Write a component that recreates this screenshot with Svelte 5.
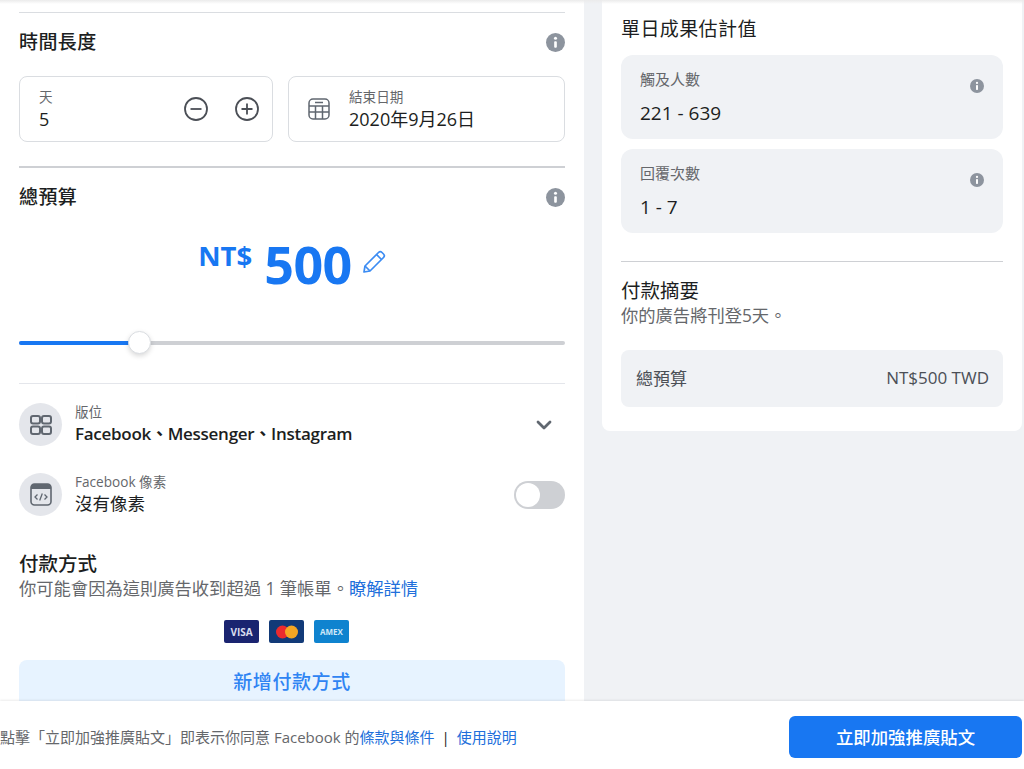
<script>
  const reach = [
    { label: '觸及人數', value: '221 - 639' },
    { label: '回覆次數', value: '1 - 7' }
  ];
</script>

{#snippet info(size)}
  <svg class="info" width={size} height={size} viewBox="0 0 20 20">
    <circle cx="10" cy="10" r="10" fill="#8d949e" />
    <circle cx="10" cy="5.6" r="1.6" fill="#fff" />
    <rect x="8.6" y="8.6" width="2.8" height="7" rx="1" fill="#fff" />
  </svg>
{/snippet}

<div class="page">
  <div class="top-shadow"></div>
  <main>
    <section class="left">
      <hr class="first" />
      <div class="head">
        <h2>時間長度</h2>
        {@render info(19)}
      </div>
      <div class="fields">
        <div class="field days">
          <div class="field-text">
            <span class="small">天</span>
            <span class="val">5</span>
          </div>
          <svg width="26" height="26" viewBox="0 0 26 26" fill="none" stroke="#4b4f56" stroke-width="1.8">
            <circle cx="13" cy="13" r="11" />
            <path d="M7.5 13h11" />
          </svg>
          <svg width="26" height="26" viewBox="0 0 26 26" fill="none" stroke="#4b4f56" stroke-width="1.8">
            <circle cx="13" cy="13" r="11" />
            <path d="M7.5 13h11M13 7.5v11" />
          </svg>
        </div>
        <div class="field date">
          <svg width="22" height="22" viewBox="0 0 22 22" fill="none" stroke="#606770" stroke-width="1.5">
            <rect x="1" y="1" width="20" height="20" rx="4" />
            <path d="M1 8h20M1 14h20M7.5 8v13M14.5 8v13M7 4.5h8" />
          </svg>
          <div class="field-text">
            <span class="small">結束日期</span>
            <span class="val">2020年9月26日</span>
          </div>
        </div>
      </div>

      <hr class="second" />
      <div class="head budget-head">
        <h2>總預算</h2>
        {@render info(19)}
      </div>
      <div class="amount">
        <span class="currency">NT$</span>
        <span class="sum">500</span>
        <svg class="pencil" width="26" height="26" viewBox="0 0 26 26" fill="none" stroke="#3c8cf3" stroke-width="1.7" stroke-linejoin="round">
          <path d="M3 23l1-6L17.5 3.5a2.5 2.5 0 0 1 3.5 0l1.5 1.5a2.5 2.5 0 0 1 0 3.5L9 22z" />
          <path d="M15.5 5.5l5 5M4 17l5 5" />
        </svg>
      </div>
      <div class="slider">
        <div class="fill"></div>
        <div class="thumb"></div>
      </div>

      <hr class="third" />
      <div class="row placement">
        <div class="round">
          <svg width="24" height="20" viewBox="0 0 24 20" fill="none" stroke="#606770" stroke-width="2">
            <rect x="2" y="1" width="9" height="7.5" rx="2" />
            <rect x="13" y="1" width="9" height="7.5" rx="2" />
            <rect x="2" y="11.5" width="9" height="7.5" rx="2" />
            <rect x="13" y="11.5" width="9" height="7.5" rx="2" />
          </svg>
        </div>
        <div class="row-text">
          <span class="small">版位</span>
          <strong>Facebook、Messenger、Instagram</strong>
        </div>
        <svg class="chev" width="16" height="10" viewBox="0 0 16 10" fill="none" stroke="#606770" stroke-width="2.8" stroke-linecap="round" stroke-linejoin="round">
          <path d="M2 2l6 6 6-6" />
        </svg>
      </div>
      <div class="row pixel">
        <div class="round">
          <svg width="22" height="23" viewBox="0 0 22 23" fill="none">
            <rect x="1" y="1" width="20" height="21" rx="3.5" stroke="#606770" stroke-width="1.6" />
            <path d="M1 4.5a3.5 3.5 0 0 1 3.5-3.5h13A3.5 3.5 0 0 1 21 4.5V6H1z" fill="#606770" />
            <path d="M7.5 11.5L5 14l2.500 2.500M14.500 11.500L17 14l-2.500 2.500M12.300 10.500l-2.600 7" stroke="#606770" stroke-width="1.300" />
          </svg>
        </div>
        <div class="row-text">
          <span class="small">Facebook 像素</span>
          <span class="plain">沒有像素</span>
        </div>
        <div class="toggle"><div class="knob"></div></div>
      </div>

      <h3 class="pay-title">付款方式</h3>
      <p class="sub">你可能會因為這則廣告收到超過 1 筆帳單。<span class="link">瞭解詳情</span></p>
      <div class="cards">
        <div class="card visa">VISA</div>
        <div class="card mc">
          <svg width="24" height="14" viewBox="0 0 24 14">
            <circle cx="7.500" cy="7" r="6.500" fill="#eb2a2e" />
            <circle cx="16.500" cy="7" r="6.500" fill="#f6a623" />
          </svg>
        </div>
        <div class="card amex">AMEX</div>
      </div>
      <div class="add-btn">新增付款方式</div>
    </section>

    <aside class="right">
      <h2 class="est">單日成果估計值</h2>
      {#each reach as item}
        <div class="stat">
          <div class="stat-text">
            <span class="stat-label">{item.label}</span>
            <span class="stat-value">{item.value}</span>
          </div>
          {@render info(14)}
        </div>
      {/each}
      <hr class="right-line" />
      <h3 class="summary">付款摘要</h3>
      <p class="sub run">你的廣告將刊登5天。</p>
      <div class="total">
        <span>總預算</span>
        <span>NT$500 TWD</span>
      </div>
    </aside>
  </main>

  <footer>
    <p>點擊「立即加強推廣貼文」即表示你同意 Facebook 的<span class="link">條款與條件</span><span class="sep">|</span><span class="link">使用說明</span></p>
    <div class="go">立即加強推廣貼文</div>
  </footer>
</div>

<style>
  :global(body) {
    background: #f0f2f5;
    font-family: "Open Sans", "Noto Sans CJK TC", sans-serif;
    color: #1c1e21;
  }

  .page {
    position: relative;
    width: 1024px;
    height: 769px;
    display: flex;
    flex-direction: column;
    overflow: hidden;
  }

  .top-shadow {
    position: absolute;
    left: 0;
    right: 0;
    top: 0;
    height: 4px;
    background: linear-gradient(#ebebeb, rgba(235, 235, 235, 0));
    z-index: 2;
  }

  main {
    flex: 1;
    min-height: 0;
    display: flex;
    align-items: flex-start;
    overflow: hidden;
  }

  hr {
    border: 0;
    margin: 0;
    background: #dadde1;
    height: 1px;
  }

  h2, h3, p {
    margin: 0;
    font-weight: 500;
  }

  .left {
    width: 584px;
    box-sizing: border-box;
    height: 760px;
    flex-shrink: 0;
    padding: 12px 19px 0;
    background: #fff;
  }

  .head {
    display: flex;
    justify-content: space-between;
    align-items: center;
    margin-top: 15px;
    height: 28px;
  }

  h2 {
    font-size: 19px;
    line-height: 28px;
    letter-spacing: 0.4px;
  }

  .fields {
    display: flex;
    gap: 15px;
    margin-top: 20px;
  }

  .field {
    box-sizing: border-box;
    height: 66px;
    border: 1px solid #dadde1;
    border-radius: 8px;
    display: flex;
    align-items: center;
  }

  .field-text {
    display: flex;
    flex-direction: column;
    padding-top: 2px;
  }

  .days {
    width: 254px;
    padding: 0 12px 0 19px;
    gap: 25px;
  }

  .days .field-text {
    flex: 1;
  }

  .date {
    flex: 1;
    padding: 0 19px;
    gap: 19px;
  }

  .small {
    font-size: 13.6px;
    line-height: 18px;
    color: #65676b;
  }

  .val {
    font-size: 18px;
    line-height: 27px;
  }

  .second {
    margin-top: 24px;
    height: 2px;
    background: #ced0d4;
  }

  .budget-head {
    margin-top: 15px;
  }

  .amount {
    display: flex;
    justify-content: center;
    margin-top: 23px;
    height: 60px;
    color: #1877f2;
    font-weight: 700;
    padding-left: 1px;
  }

  .currency {
    font-size: 27.5px;
    line-height: 36px;
    margin-right: 12px;
    margin-top: 4px;
  }

  .sum {
    font-size: 52px;
    line-height: 60px;
    letter-spacing: -0.5px;
  }

  .pencil {
    margin: 15px 0 0 9px;
  }

  .slider {
    position: relative;
    margin-top: 47px;
    height: 4px;
    border-radius: 2px;
    background: #ced0d4;
  }

  .fill {
    height: 100%;
    width: 112px;
    border-radius: 2px;
    background: #1877f2;
  }

  .thumb {
    position: absolute;
    left: 109px;
    top: -10px;
    box-sizing: border-box;
    width: 23px;
    height: 23px;
    border-radius: 50%;
    background: #fff;
    border: 1px solid #dadde1;
    box-shadow: 0 2px 5px rgba(0, 0, 0, 0.15);
  }

  .third {
    margin-top: 38px;
    background: #e4e6eb;
  }

  .row {
    display: flex;
    align-items: center;
    height: 43px;
  }

  .placement {
    margin-top: 19px;
  }

  .pixel {
    margin-top: 27px;
  }

  .round {
    width: 43px;
    height: 43px;
    flex-shrink: 0;
    border-radius: 50%;
    background: #e4e6eb;
    display: flex;
    align-items: center;
    justify-content: center;
    margin-right: 13px;
  }

  .row-text {
    flex: 1;
    display: flex;
    flex-direction: column;
  }

  .row-text strong {
    font-size: 17px;
    font-weight: 600;
    line-height: 26px;
    letter-spacing: -0.28px;
  }

  .plain {
    font-size: 17.5px;
    line-height: 25px;
  }

  .chev {
    margin-right: 13px;
  }

  .toggle {
    width: 51px;
    height: 28px;
    border-radius: 14px;
    background: #ced0d4;
    position: relative;
  }

  .knob {
    position: absolute;
    left: 2px;
    top: 2px;
    width: 24px;
    height: 24px;
    border-radius: 50%;
    background: #fff;
  }

  .pay-title {
    font-size: 19.5px;
    line-height: 26px;
    margin-top: 35px;
  }

  p.sub {
    font-size: 17.3px;
    font-weight: 400;
    line-height: 24px;
    color: #65676b;
  }

  .link {
    color: #216fdb;
  }

  .cards {
    display: flex;
    justify-content: center;
    gap: 10px;
    margin-top: 19px;
    padding-right: 11px;
  }

  .card {
    width: 35px;
    height: 23px;
    border-radius: 2px;
    display: flex;
    align-items: center;
    justify-content: center;
    font-weight: 700;
  }

  .visa {
    background: #1a2470;
    color: #d8dcee;
    font-size: 10px;
  }

  .mc {
    background: #123a78;
  }

  .amex {
    background: #0f83cf;
    color: #cfe8f8;
    font-size: 8px;
  }

  .add-btn {
    margin-top: 17px;
    height: 50px;
    box-sizing: border-box;
    padding-top: 6px;
    border-radius: 8px;
    background: #e7f3ff;
    color: #2f84f3;
    text-align: center;
    font-size: 19px;
    font-weight: 500;
    line-height: 32px;
    letter-spacing: 0.6px;
  }

  .right {
    width: 420px;
    box-sizing: border-box;
    margin-left: 18px;
    padding: 15px 19px 24px;
    background: #fff;
    border-radius: 0 0 8px 8px;
  }

  .est {
    font-weight: 400;
  }

  .stat {
    box-sizing: border-box;
    height: 84px;
    margin-top: 10px;
    padding: 13px 19px 0 19px;
    border-radius: 12px;
    background: #f0f2f5;
    display: flex;
    justify-content: space-between;
  }

  .est + .stat {
    margin-top: 12px;
  }

  .stat-text {
    display: flex;
    flex-direction: column;
  }

  .stat-label {
    font-size: 15px;
    line-height: 22px;
    color: #65676b;
  }

  .stat-value {
    font-size: 19px;
    line-height: 26px;
    margin-top: 10px;
  }

  .stat .info {
    margin-top: 11px;
  }

  .right-line {
    margin-top: 28px;
    background: #ced0d4;
  }

  .summary {
    font-size: 19.5px;
    font-weight: 400;
    line-height: 26px;
    margin-top: 16px;
  }

  .total {
    margin-top: 22px;
    height: 57px;
    box-sizing: border-box;
    padding: 0 14px 2px 15px;
    border-radius: 8px;
    background: #f0f2f5;
    display: flex;
    align-items: center;
    justify-content: space-between;
    font-size: 17px;
    color: #4b4f56;
  }

  footer {
    position: relative;
    z-index: 3;
    height: 68px;
    flex-shrink: 0;
    background: #fff;
    box-shadow: 0 -1px 2px rgba(0, 0, 0, 0.08);
    display: flex;
    align-items: center;
    justify-content: space-between;
    padding-right: 2px;
  }

  footer p {
    font-size: 15px;
    font-weight: 400;
    line-height: 20px;
    margin-top: 4px;
    color: #65676b;
  }

  .sep {
    margin: 0 7px;
    color: #1c1e21;
  }

  .go {
    width: 233px;
    height: 42px;
    margin-top: 3px;
    border-radius: 6px;
    background: #1877f2;
    color: #fff;
    text-align: center;
    font-size: 17.4px;
    font-weight: 500;
    line-height: 42px;
  }
</style>
